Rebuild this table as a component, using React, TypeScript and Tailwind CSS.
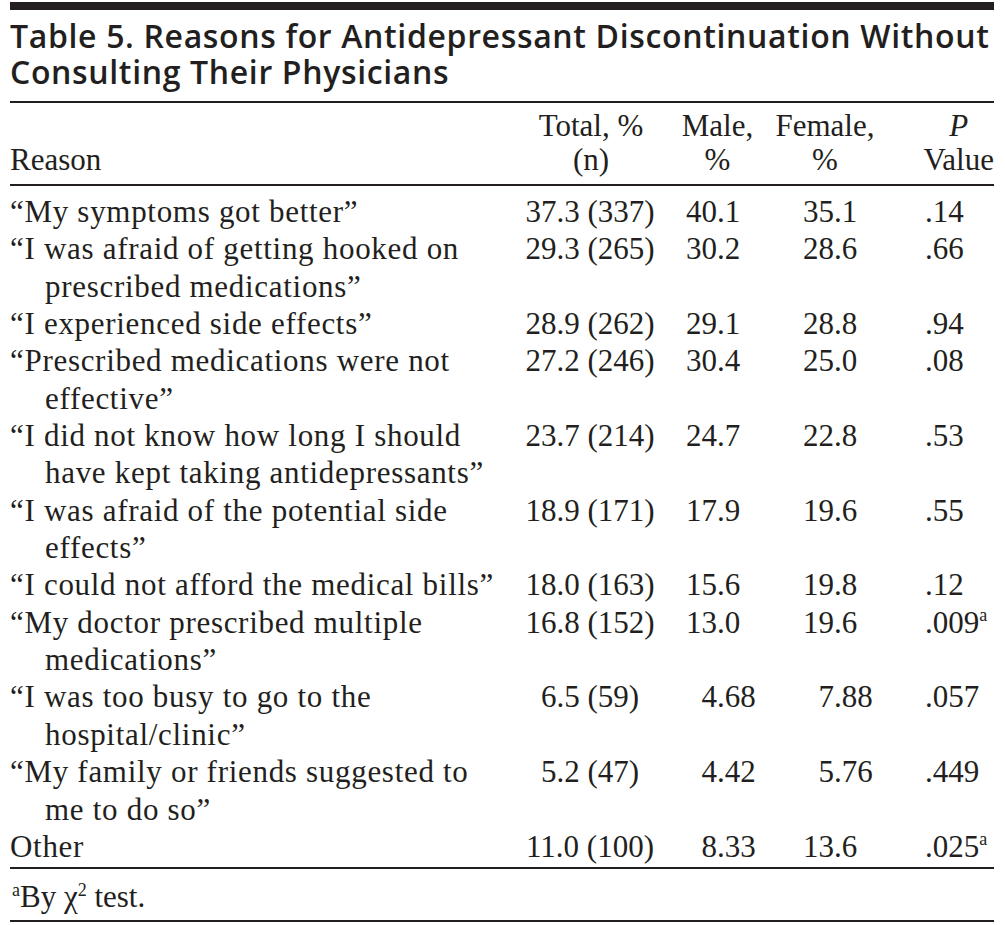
const rows = [
  { reason: ["“My symptoms got better”"], total: "37.3 (337)", male: "40.1", female: "35.1", p: ".14" },
  { reason: ["“I was afraid of getting hooked on", "prescribed medications”"], total: "29.3 (265)", male: "30.2", female: "28.6", p: ".66" },
  { reason: ["“I experienced side effects”"], total: "28.9 (262)", male: "29.1", female: "28.8", p: ".94" },
  { reason: ["“Prescribed medications were not", "effective”"], total: "27.2 (246)", male: "30.4", female: "25.0", p: ".08" },
  { reason: ["“I did not know how long I should", "have kept taking antidepressants”"], total: "23.7 (214)", male: "24.7", female: "22.8", p: ".53" },
  { reason: ["“I was afraid of the potential side", "effects”"], total: "18.9 (171)", male: "17.9", female: "19.6", p: ".55" },
  { reason: ["“I could not afford the medical bills”"], total: "18.0 (163)", male: "15.6", female: "19.8", p: ".12" },
  { reason: ["“My doctor prescribed multiple", "medications”"], total: "16.8 (152)", male: "13.0", female: "19.6", p: ".009", sig: true },
  { reason: ["“I was too busy to go to the", "hospital/clinic”"], total: "6.5 (59)", male: "4.68", female: "7.88", p: ".057" },
  { reason: ["“My family or friends suggested to", "me to do so”"], total: "5.2 (47)", male: "4.42", female: "5.76", p: ".449" },
  { reason: ["Other"], total: "11.0 (100)", male: "8.33", female: "13.6", p: ".025", sig: true },
];

// split a number on its decimal point so the column lines up
function Decimal({ value, intWidth }: { value: string; intWidth: string }) {
  const i = value.indexOf(".");
  return (
    <div className="flex">
      <span className={`${intWidth} text-right`}>{value.slice(0, i)}</span>
      <span>{value.slice(i)}</span>
    </div>
  );
}

export default function App() {
  return (
    <div className="w-[1005px] h-[925px] bg-white text-[#231f20]">
      <div className="ml-[10px] w-[984px] pt-[2px]">
        <div className="h-[8px] bg-[#231f20]" />

        <h1 className="mt-[8px] font-['Open_Sans',sans-serif] font-semibold text-[32px] leading-[36px] tracking-[0.65px]">
          Table 5. Reasons for Antidepressant Discontinuation Without
          <br />
          Consulting Their Physicians
        </h1>

        <div className="mt-[11px] h-[2px] bg-[#231f20]" />

        <div className="font-['Liberation_Serif',serif] text-[31px]">
          <div className="grid grid-cols-[505px_150px_95px_140px_94px] leading-[34px] pt-[6px] pb-[7px]">
            <div className="self-end">Reason</div>
            <div className="text-center pl-[2px]">
              Total, %<br />(n)
            </div>
            <div className="text-center pl-[10px]">
              Male,<br />%
            </div>
            <div className="text-center pr-[10px]">
              Female,<br />%
            </div>
            <div className="flex justify-end">
              <div className="text-center">
                <span className="italic">P</span>
                <br />
                Value
              </div>
            </div>
          </div>

          <div className="h-[2px] bg-[#231f20]" />

          <div className="pt-[7px] pb-[2px] leading-[37.35px]">
            {rows.map((r, idx) => (
              <div key={idx} className="grid grid-cols-[505px_150px_95px_140px_94px]">
                <div className="tracking-[0.7px]">
                  {r.reason.map((line, j) => (
                    <div key={j} className={j > 0 ? "pl-[35px]" : ""}>
                      {line}
                    </div>
                  ))}
                </div>
                <div className="text-center">{r.total}</div>
                <Decimal value={r.male} intWidth="w-[52px]" />
                <Decimal value={r.female} intWidth="w-[74px]" />
                <div className="pl-[25px]">
                  {r.p}
                  {r.sig && <sup className="text-[18px] -top-[12px]">a</sup>}
                </div>
              </div>
            ))}
          </div>

          <div className="h-[2px] bg-[#231f20]" />

          <div className="leading-[37px] pt-[9px] pb-[5px] pl-[2px]">
            <sup className="text-[18px] -top-[11px]">a</sup>By χ<sup className="text-[18px] -top-[11px]">2</sup> test.
          </div>

          <div className="h-[2px] bg-[#231f20]" />
        </div>
      </div>
    </div>
  );
}
